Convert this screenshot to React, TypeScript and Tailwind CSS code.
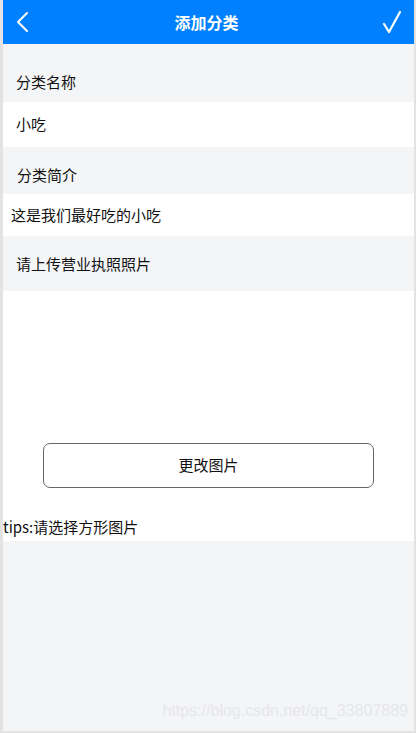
import React from 'react';

const font = { fontFamily: '"Noto Sans CJK SC", "Liberation Sans", sans-serif' };

const App: React.FC = () => {
  return (
    <div
      className="relative flex h-[733px] w-[416px] flex-col overflow-hidden border-b-2 border-l-[3px] border-r-2 border-[#e3e3e3] bg-[#f4f5f7] text-[15px] text-[#111]"
      style={font}
    >
      {/* header */}
      <div className="flex h-[44px] shrink-0 items-center justify-between bg-[#0080ff] px-[12px]">
        <svg className="h-[22px] w-[16px]" viewBox="0 0 16 22" fill="none">
          <path d="M12 2L3 11l9 9" stroke="#fff" strokeWidth="2" strokeLinecap="round" strokeLinejoin="round" />
        </svg>
        <h1 className="text-[16px] font-bold text-white">添加分类</h1>
        <svg className="h-[24px] w-[20px]" viewBox="0 0 20 24" fill="none">
          <path d="M2 14l5 8L18 2" stroke="#fff" strokeWidth="2.2" strokeLinecap="round" strokeLinejoin="round" />
        </svg>
      </div>

      <div className="flex h-[58px] items-end pb-[9px] pl-[13px]">分类名称</div>
      <div className="flex h-[45px] items-center bg-white pl-[13px]">小吃</div>

      <div className="flex h-[47px] items-center pl-[14px] pt-[10px]">分类简介</div>
      <div className="flex h-[42px] items-center bg-white pl-[8px]">这是我们最好吃的小吃</div>

      <div className="flex h-[55px] items-center pl-[13px] pt-[2px]">请上传营业执照照片</div>

      <div className="flex h-[250px] flex-col bg-white">
        <div className="flex flex-1 items-end justify-center pb-[29px]">
          <button className="h-[45px] w-[331px] rounded-[7px] border border-[#666] bg-white text-[15px] text-[#111]">
            更改图片
          </button>
        </div>
        <p className="mb-[4px] leading-[20px]">tips:请选择方形图片</p>
      </div>

      <div className="flex flex-1 items-end justify-end pb-[8px] pr-[6px]">
        <span
          className="text-[16px] text-[#e6e7ea]"
          style={{ fontFamily: '"Liberation Sans", Arial, sans-serif' }}
        >
          https://blog.csdn.net/qq_33807889
        </span>
      </div>
    </div>
  );
};

export default App;
